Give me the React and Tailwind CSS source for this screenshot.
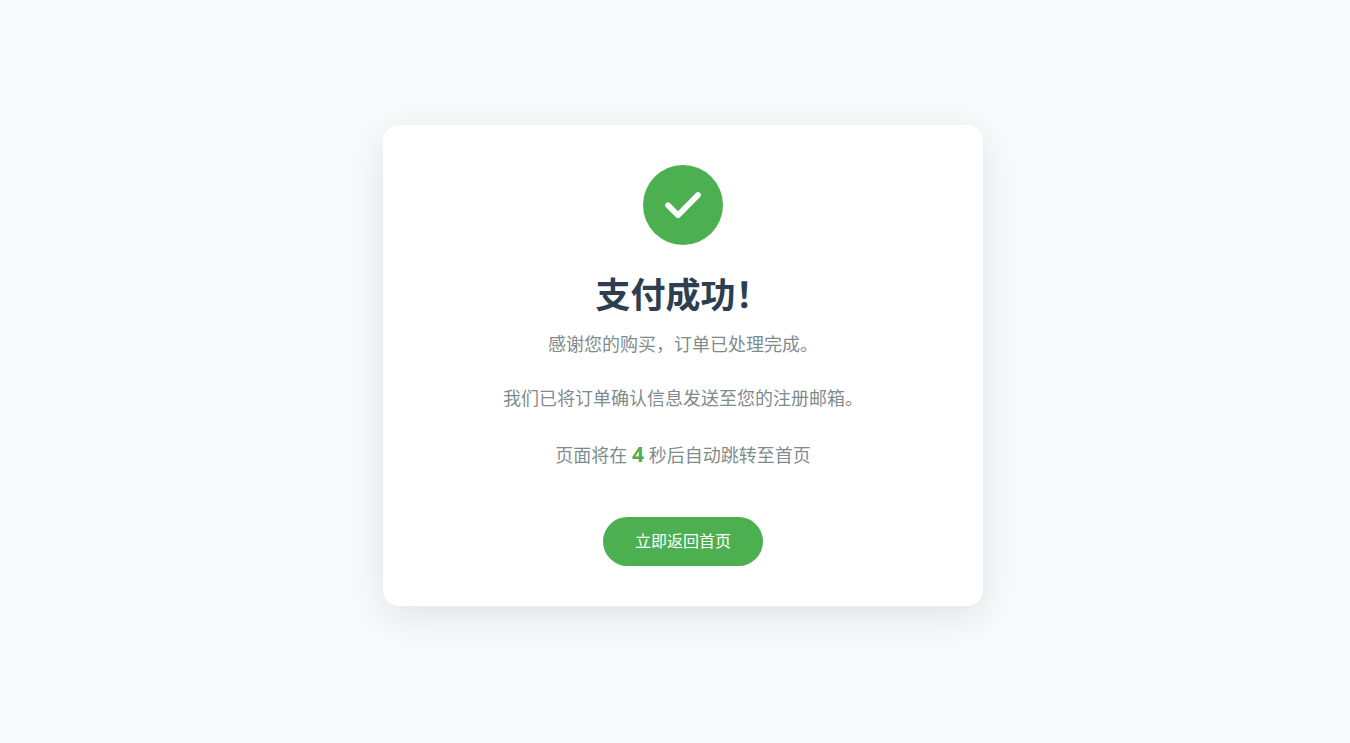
import React from 'react';

const SECONDS_LEFT = 4;

function CheckMark() {
  return (
    <svg width="40" height="40" viewBox="0 0 40 40" fill="none" aria-hidden="true">
      <path d="M5 20.3 15 30.2 35 10" stroke="currentColor" strokeWidth="5.8" strokeLinecap="round" strokeLinejoin="round" />
    </svg>
  );
}

export default function App() {
  return (
    <main className="min-h-screen pl-4 pb-3 flex items-center justify-center bg-[#f9fafc] font-['Open_Sans','Noto_Sans_CJK_SC',sans-serif]">
      <section className="w-full max-w-[600px] p-10 flex flex-col items-center rounded-2xl bg-white text-center shadow-[0_10px_40px_rgba(0,0,0,0.1)]">
        <div className="w-20 h-20 mb-6 flex items-center justify-center rounded-full bg-[#4caf50] text-white">
          <CheckMark />
        </div>

        <h1 className="mb-[9px] text-[35px] leading-[52px] font-bold text-[#2c3e50]">支付成功！</h1>

        <div className="text-lg leading-7 text-[#7f8c8d]">
          <p className="mb-[26px]">感谢您的购买，订单已处理完成。</p>
          <p className="mb-7">我们已将订单确认信息发送至您的注册邮箱。</p>
          <p className="mb-12">
            页面将在 <span className="text-[21px] leading-7 font-bold text-[#4caf50]">{SECONDS_LEFT}</span> 秒后自动跳转至首页
          </p>
        </div>

        <a href="/" className="px-8 py-3 rounded-full bg-[#4caf50] text-base leading-[25px] text-white hover:bg-[#43a047]">
          立即返回首页
        </a>
      </section>
    </main>
  );
}
